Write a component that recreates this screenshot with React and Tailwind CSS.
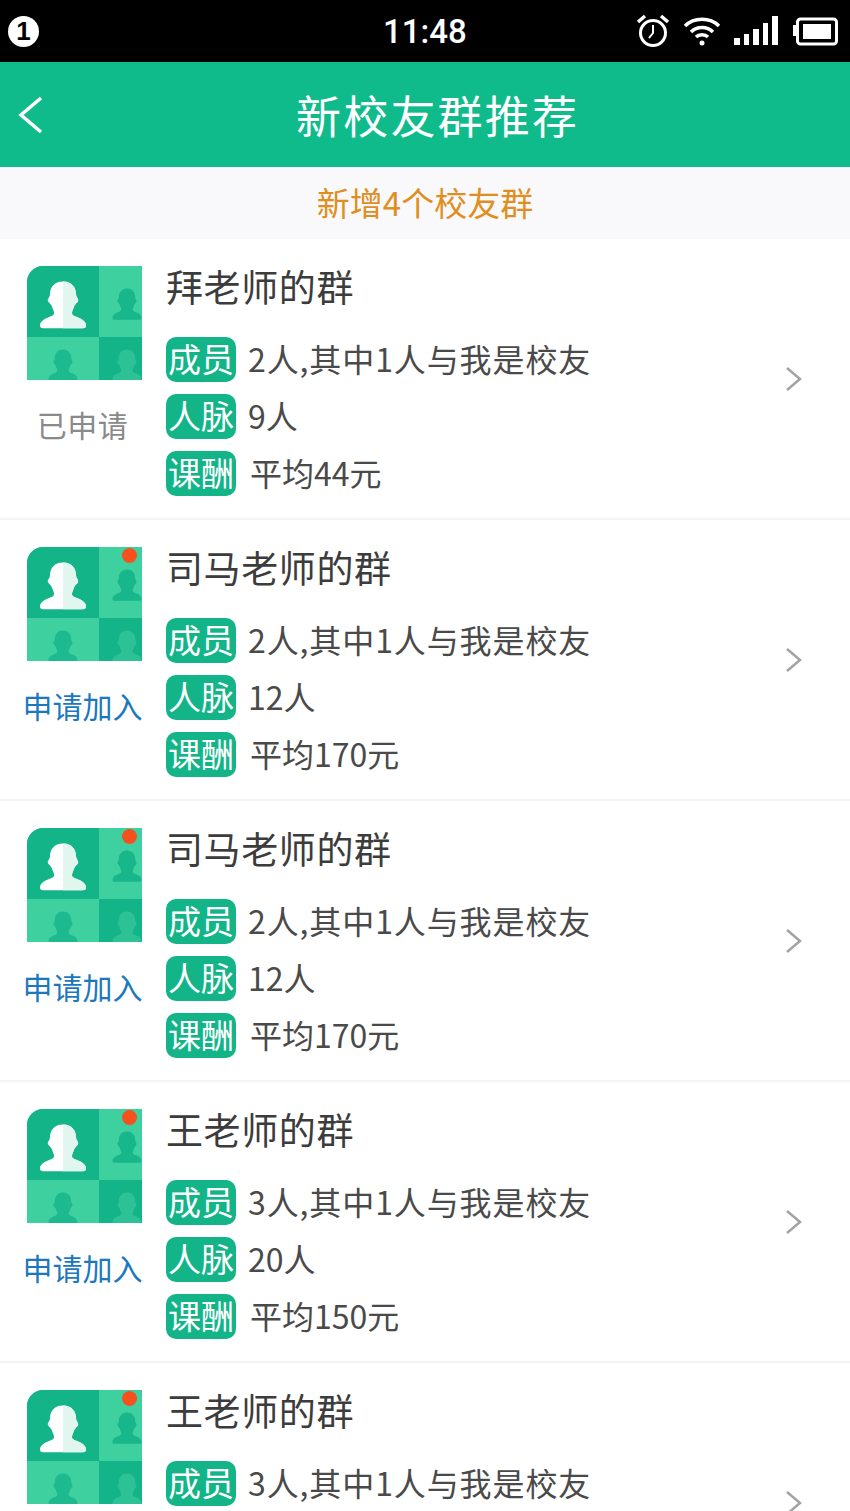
import React from "react";

const groups = [
  { title: "拜老师的群", members: "2人,其中1人与我是校友", network: "9人", fee: "平均44元", applied: true },
  { title: "司马老师的群", members: "2人,其中1人与我是校友", network: "12人", fee: "平均170元" },
  { title: "司马老师的群", members: "2人,其中1人与我是校友", network: "12人", fee: "平均170元" },
  { title: "王老师的群", members: "3人,其中1人与我是校友", network: "20人", fee: "平均150元" },
  { title: "王老师的群", members: "3人,其中1人与我是校友", network: "20人", fee: "平均150元" },
];

const PERSON =
  "M0 -24 C-9 -24 -13 -17 -13 -10 C-13 -6 -16 -5 -15 -2 C-14 0 -12 1 -11 4 C-10 8 -9 9 -9 11 C-9 13 -10 14 -15 16 C-20 18 -23 21 -23 25 C-23 27 -22 28 -20 28 L20 28 C22 28 23 27 23 25 C23 21 20 18 15 16 C10 14 9 13 9 11 C9 9 10 8 11 4 C12 1 14 0 15 -2 C16 -5 13 -6 13 -10 C13 -17 9 -24 0 -24 Z";

function GroupAvatar({ dot }) {
  return (
    <div className="relative w-[115px] h-[114px]">
      <svg width="115" height="114" viewBox="0 0 115 114" className="block">
        <defs>
          <clipPath id="avatar-clip">
            <path d="M16 0 H115 V114 H0 V16 A16 16 0 0 1 16 0 Z" />
          </clipPath>
          <clipPath id="person-half">
            <rect x="0" y="-30" width="30" height="60" />
          </clipPath>
        </defs>
        <g clipPath="url(#avatar-clip)">
          <rect width="115" height="114" fill="#3fd09f" />
          <rect width="72" height="71" fill="#13b488" />
          <rect x="72" y="71" width="43" height="43" fill="#13b488" />
          <g transform="translate(36 37) scale(1 0.9)">
            <path d={PERSON} fill="#ffffff" />
            <path d={PERSON} fill="#e2f6f0" clipPath="url(#person-half)" />
          </g>
          <path transform="translate(100 37) scale(0.63 0.6)" d={PERSON} fill="#17b68b" />
          <path transform="translate(36 98) scale(0.63 0.6)" d={PERSON} fill="#1dba8f" />
          <path transform="translate(100 98) scale(0.63 0.6)" d={PERSON} fill="#2cc295" />
        </g>
      </svg>
      {dot && <span className="absolute top-[1px] right-[5px] w-[15px] h-[15px] rounded-full bg-[#f4511e]" />}
    </div>
  );
}

function Tag({ children }) {
  return (
    <span className="flex items-center justify-center shrink-0 w-[70px] h-[45px] pb-[2px] rounded-[10px] bg-[#13b488] text-white text-[33px] leading-none">
      {children}
    </span>
  );
}

function InfoRow({ label, value, className }) {
  return (
    <div className="flex items-center h-[45px]">
      <Tag>{label}</Tag>
      <span className={`${className} pb-[4px] text-[32px] leading-none text-[#4a4a4a] whitespace-nowrap`}>{value}</span>
    </div>
  );
}

function GroupRow({ group }) {
  return (
    <div className="flex items-center shrink-0 h-[281px] pl-[27px] pr-[47px] border-b-2 border-[#f4f4f4]">
      <div className="self-start pt-[27px] w-[115px] flex flex-col items-center">
        <GroupAvatar dot={!group.applied} />
        {group.applied ? (
          <div className="mt-[27px] mr-[4px] text-[30px] leading-[34px] text-[#8a8a8a] tracking-[0.5px] whitespace-nowrap">已申请</div>
        ) : (
          <div className="mt-[27px] mr-[4px] text-[30px] leading-[34px] text-[#1c78bd] whitespace-nowrap">申请加入</div>
        )}
      </div>
      <div className="self-start ml-[24px] pt-[27px]">
        <div className="h-[44px] pb-[4px] flex items-center text-[37px] tracking-[0.6px] leading-none text-[#3c3c3c] whitespace-nowrap">{group.title}</div>
        <div className="mt-[27px] flex flex-col gap-[12px]">
          <InfoRow label="成员" value={group.members} className="ml-[12px] tracking-[0.9px]" />
          <InfoRow label="人脉" value={group.network} className="ml-[12px]" />
          <InfoRow label="课酬" value={group.fee} className="ml-[14px]" />
        </div>
      </div>
      <svg width="18" height="26" viewBox="0 0 18 26" fill="none" className="ml-auto">
        <path d="M2 2 L15 13 L2 24" stroke="#a3a3a3" strokeWidth="2.5" />
      </svg>
    </div>
  );
}

function StatusIcons() {
  return (
    <div className="flex items-center">
      <svg width="34" height="34" viewBox="0 0 34 34" fill="none" stroke="#fff" strokeWidth="3">
        <circle cx="17" cy="19" r="12.5" />
        <path d="M17 11 V19 L13 24" strokeWidth="2" />
        <path d="M2 8 L9 2 M32 8 L25 2" strokeWidth="3.5" />
      </svg>
      <svg width="38" height="30" viewBox="0 0 38 30" fill="none" stroke="#fff" strokeWidth="3.5" className="ml-[13px]">
        <path d="M2 10 C11 1 27 1 36 10" />
        <path d="M8 16 C14 10 24 10 30 16" />
        <path d="M13 21 C16 18 22 18 25 21" />
        <circle cx="19" cy="27" r="2.5" fill="#fff" stroke="none" />
      </svg>
      <svg width="44" height="30" viewBox="0 0 44 30" fill="#fff" className="ml-[13px]">
        <rect x="0" y="22" width="6" height="7" />
        <rect x="10" y="18" width="5" height="11" />
        <rect x="19" y="13" width="6" height="16" />
        <rect x="29" y="7" width="5" height="22" />
        <rect x="38" y="0" width="6" height="29" />
      </svg>
      <svg width="45" height="30" viewBox="0 0 45 30" fill="none" className="ml-[15px]">
        <rect x="0" y="9" width="4" height="11" fill="#fff" />
        <rect x="4.5" y="3" width="39" height="25" rx="3" stroke="#fff" strokeWidth="3" />
        <rect x="10" y="8" width="28" height="15" fill="#fff" />
      </svg>
    </div>
  );
}

export default function App() {
  return (
    <div className="w-[850px] h-[1511px] overflow-hidden flex flex-col bg-white font-['Noto_Sans_CJK_SC','Noto_Sans',sans-serif]">
      {/* Status bar */}
      <div className="shrink-0 h-[62px] bg-black flex items-center justify-between pl-[8px] pr-[12px] relative">
        <span className="flex items-center justify-center w-[31px] h-[31px] rounded-full bg-white text-black text-[26px] font-bold leading-none font-['Liberation_Sans',sans-serif]">1</span>
        <span className="absolute left-[383px] text-white text-[33px] font-medium leading-none font-['Roboto',sans-serif]">11:48</span>
        <StatusIcons />
      </div>

      {/* Header */}
      <div className="shrink-0 h-[105px] bg-[#10bb8b] flex items-center pl-[18px]">
        <svg width="26" height="38" viewBox="0 0 26 38" fill="none" className="shrink-0">
          <path d="M23 2 L3 19 L23 36" stroke="#fff" strokeWidth="3.5" />
        </svg>
        <div className="ml-[252px] pb-[1px] text-white text-[45px] tracking-[2.2px] leading-none whitespace-nowrap">新校友群推荐</div>
      </div>

      {/* Notice */}
      <div className="shrink-0 h-[72px] pb-[2px] bg-[#f9f9fb] flex items-center justify-center text-[33px] leading-none text-[#e08e20]">
        新增4个校友群
      </div>

      {groups.map((group, i) => (
        <GroupRow key={i} group={group} />
      ))}
    </div>
  );
}
